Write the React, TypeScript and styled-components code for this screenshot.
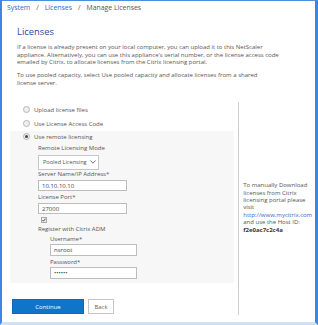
import styled, { createGlobalStyle } from "styled-components";

const GlobalStyle = createGlobalStyle`
  html, body {
    margin: 0;
    padding: 0;
    background: #ffffff;
  }
  body {
    font-family: "Open Sans", "Liberation Sans", sans-serif;
  }
`;

const Frame = styled.div`
  box-sizing: border-box;
  width: 318px;
  height: 325px;
  border-top: 1px solid #4b8fe0;
  border-left: 2px solid #3a86e2;
  border-right: 3px solid #3a86e2;
  border-bottom: 3px solid #cfe1f7;
  background: #ffffff;
  overflow: hidden;
  color: #555555;
`;

const Breadcrumb = styled.div`
  display: flex;
  gap: 6px;
  padding: 3px 0 0 5px;
  height: 12px;
  font-size: 6.9px;
  line-height: 8px;
  color: #555;
`;

const Crumb = styled.span<{ $link?: boolean }>`
  color: ${(p) => (p.$link ? "#2b6cc4" : "#555")};
`;

const Page = styled.div`
  padding: 9px 0 0 15px;
`;

const Title = styled.h1`
  margin: 0;
  font-size: 9.4px;
  line-height: 14px;
  font-weight: 400;
  color: #2c4a9c;
`;

const Para = styled.p<{ $w?: number }>`
  margin: 5px 0 0 0;
  width: ${(p) => p.$w ?? 262}px;
  font-size: 6px;
  line-height: 7.7px;
  color: #555;
`;

const Columns = styled.div`
  display: flex;
  margin: 14px 0 0 -7px;
`;

const Main = styled.div`
  width: 229px;
  padding-top: 1px;
  display: flex;
  flex-direction: column;
`;

const Side = styled.div`
  width: 72px;
  height: 213px;
  border-left: 1px solid #cfcfcf;
  padding-left: 4px;
  display: flex;
  flex-direction: column;
  justify-content: center;
  font-size: 6px;
  line-height: 7.4px;
  color: #555;
`;

const SideLink = styled.span`
  color: #2b6cc4;
  white-space: nowrap;
`;

const HostId = styled.b`
  color: #333;
`;

const RadioRow = styled.div<{ $h?: number }>`
  display: flex;
  align-items: center;
  gap: 4px;
  height: ${(p) => p.$h ?? 14}px;
  padding-left: 13px;
  font-size: 6px;
  color: #555;
`;

const Radio = styled.span<{ $on?: boolean }>`
  box-sizing: border-box;
  width: 7px;
  height: 7px;
  border-radius: 50%;
  border: 1px solid #b5b5b5;
  background: #f0f0f0;
  display: flex;
  align-items: center;
  justify-content: center;
  &::after {
    content: "";
    width: 3px;
    height: 3px;
    border-radius: 50%;
    background: ${(p) => (p.$on ? "#444" : "transparent")};
  }
`;

const Panel = styled.div`
  width: 224px;
  background: #f7f7f7;
  padding: 0 0 4px 0;
`;

const Form = styled.div<{ $indent: number }>`
  display: flex;
  flex-direction: column;
  padding-left: ${(p) => p.$indent}px;
`;

const Label = styled.div<{ $gap?: number }>`
  font-size: 6px;
  line-height: 7px;
  margin-top: ${(p) => p.$gap ?? 2.5}px;
  white-space: nowrap;
  color: #555;
`;

const Select = styled.div`
  box-sizing: border-box;
  margin-top: 2.5px;
  width: 61px;
  height: 15px;
  border: 1px solid #c6c6c6;
  background: #ffffff;
  display: flex;
  align-items: center;
  justify-content: space-between;
  padding: 0 2px 0 4px;
  font-size: 5.6px;
  white-space: nowrap;
  color: #555;
`;

const Input = styled.input<{ $w: number; $h: number; $gap: number }>`
  box-sizing: border-box;
  margin-top: ${(p) => p.$gap}px;
  width: ${(p) => p.$w}px;
  height: ${(p) => p.$h}px;
  border: 1px solid #bdbdbd;
  background: #ffffff;
  padding: 0 3px;
  font-family: "Open Sans", "Liberation Sans", sans-serif;
  font-size: 6px;
  color: #444;
  outline: none;
`;

const Check = styled.span`
  box-sizing: border-box;
  margin: 2.5px 0 0 3px;
  width: 6px;
  height: 6px;
  border: 1px solid #aaa;
  background: #eee;
  display: flex;
  align-items: center;
  justify-content: center;
`;

const Buttons = styled.div`
  display: flex;
  gap: 4px;
  margin: 16px 0 0 2px;
`;

const Button = styled.button<{ $primary?: boolean }>`
  box-sizing: border-box;
  height: 15px;
  padding: 0;
  width: ${(p) => (p.$primary ? 72 : 26)}px;
  border: 1px solid ${(p) => (p.$primary ? "#0a6cc0" : "#c4c4c4")};
  background: ${(p) => (p.$primary ? "#0e75c9" : "#ffffff")};
  color: ${(p) => (p.$primary ? "#ffffff" : "#666")};
  font-family: "Open Sans", "Liberation Sans", sans-serif;
  font-size: 6px;
`;

export default function App() {
  return (
    <>
      <GlobalStyle />
      <Frame>
        <Breadcrumb>
          <Crumb $link>System</Crumb>
          <Crumb>/</Crumb>
          <Crumb $link>Licenses</Crumb>
          <Crumb>/</Crumb>
          <Crumb>Manage Licenses</Crumb>
        </Breadcrumb>
        <Page>
          <Title>Licenses</Title>
          <Para>
            If a license is already present on your local computer, you can upload it to this NetScaler
            appliance. Alternatively, you can use this appliance's serial number, or the license access code
            emailed by Citrix, to allocate licenses from the Citrix licensing portal.
          </Para>
          <Para $w={246}>
            To use pooled capacity, select Use pooled capacity and allocate licenses from a shared license
            server.
          </Para>
          <Columns>
            <Main>
              <RadioRow>
                <Radio />
                Upload license files
              </RadioRow>
              <RadioRow>
                <Radio />
                Use License Access Code
              </RadioRow>
              <Panel>
                <RadioRow $h={12}>
                  <Radio $on />
                  Use remote licensing
                </RadioRow>
                <Form $indent={28}>
                  <Label>Remote Licensing Mode</Label>
                  <Select>
                    Pooled Licensing
                    <svg width="6" height="4" viewBox="0 0 6 4">
                      <path d="M0.5 0.5 L3 3.2 L5.5 0.5" fill="none" stroke="#555" strokeWidth="0.8" />
                    </svg>
                  </Select>
                  <Label $gap={1}>Server Name/IP Address*</Label>
                  <Input $w={89} $h={11} $gap={2.5} readOnly value="10.10.10.10" />
                  <Label>License Port*</Label>
                  <Input $w={89} $h={11} $gap={2.5} readOnly value="27000" />
                  <Check>
                    <svg width="4" height="4" viewBox="0 0 4 4">
                      <path d="M0.4 2 L1.5 3.2 L3.6 0.6" fill="none" stroke="#444" strokeWidth="0.9" />
                    </svg>
                  </Check>
                  <Label $gap={3}>Register with Citrix ADM</Label>
                  <Form $indent={12}>
                    <Label $gap={3}>Username*</Label>
                    <Input $w={87} $h={12} $gap={1.5} readOnly value="nsroot" />
                    <Label>Password*</Label>
                    <Input $w={87} $h={12} $gap={1.5} readOnly type="password" value="nsroot" />
                  </Form>
                </Form>
              </Panel>
              <Buttons>
                <Button $primary>Continue</Button>
                <Button>Back</Button>
              </Buttons>
            </Main>
            <Side>
              <div>To manually Download licenses from Citrix licensing portal please visit</div>
              <SideLink>http://www.mycitrix.com</SideLink>
              <div>and use the Host ID:</div>
              <HostId>f2e0ac7c2c4a</HostId>
            </Side>
          </Columns>
        </Page>
      </Frame>
    </>
  );
}
